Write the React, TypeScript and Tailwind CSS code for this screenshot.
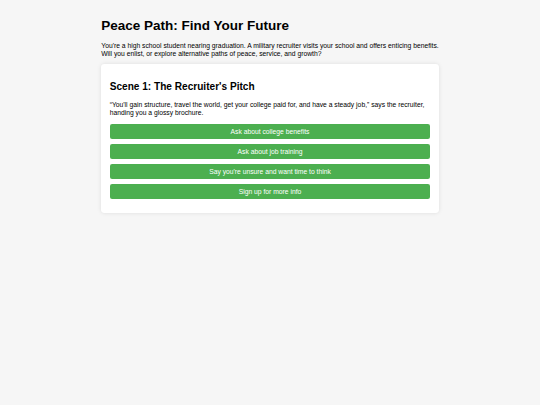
import React, { useState } from "react";

const choices = [
  "Ask about college benefits",
  "Ask about job training",
  "Say you're unsure and want time to think",
  "Sign up for more info",
];

export default function App() {
  const [picked, setPicked] = useState<string | null>(null);

  return (
    <main
      className="min-h-screen bg-[#f6f6f6] px-[8.44px] pt-[17.5px] pb-[8.44px] text-[6.75px] text-black"
      style={{ fontFamily: '"Liberation Sans", Arial, sans-serif' }}
    >
      <div className="mx-auto w-[337.5px]">
        <h1 className="text-[13.5px] font-bold leading-[15.5px]">
          Peace Path: Find Your Future
        </h1>
        <p className="mt-[9px] leading-[7.8px]">
          You're a high school student nearing graduation. A military recruiter
          visits your school and offers enticing benefits. Will you enlist, or
          explore alternative paths of peace, service, and growth?
        </p>

        <div className="mt-[6.75px] rounded-[3.4px] bg-white px-[8.44px] pt-[17px] pb-[14px] shadow-[0_0_4px_rgba(0,0,0,0.1)]">
          <h2 className="text-[10.1px] font-bold leading-[11.6px]">
            Scene 1: The Recruiter's Pitch
          </h2>
          <p className="mt-[8.4px] leading-[7.8px]">
            “You'll gain structure, travel the world, get your college paid
            for, and have a steady job,” says the recruiter, handing you a
            glossy brochure.
          </p>
          <div className="mt-[6.75px] flex flex-col gap-[4.2px]">
            {choices.map((c) => (
              <button
                key={c}
                type="button"
                onClick={() => setPicked(c)}
                className="block h-[15.8px] w-full rounded-[2.1px] bg-[#4caf50] text-center text-[6.75px] leading-[15.8px] text-white"
              >
                {c}
              </button>
            ))}
          </div>
          {picked && <p className="hidden">{picked}</p>}
        </div>
      </div>
    </main>
  );
}
